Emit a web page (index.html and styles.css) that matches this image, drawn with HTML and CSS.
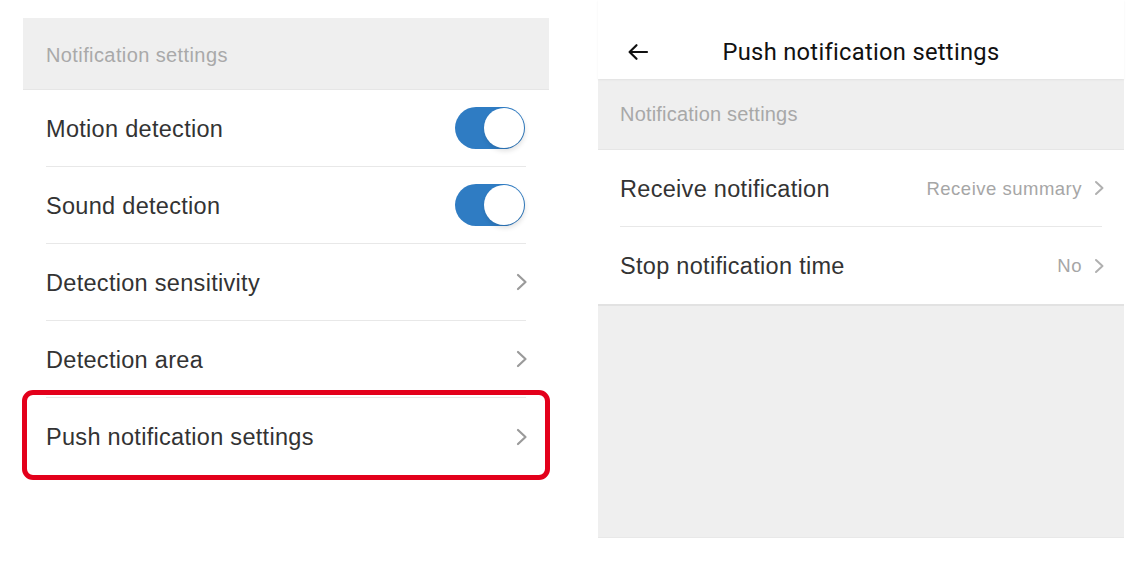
FILE: index.html
```html
<!DOCTYPE html>
<html lang="en">
<head>
<meta charset="utf-8">
<title>Push notification settings</title>
<link rel="stylesheet" href="styles.css">
</head>
<body>
<div class="page">
  <section class="panel panel-left">
    <div class="group-header">Notification settings</div>
    <div class="row">
      <span class="label">Motion detection</span>
      <span class="toggle"><span class="knob"></span></span>
    </div>
    <div class="row">
      <span class="label">Sound detection</span>
      <span class="toggle"><span class="knob"></span></span>
    </div>
    <div class="row">
      <span class="label">Detection sensitivity</span>
      <svg class="chev" width="12" height="18" viewBox="0 0 12 18"><path d="M2 2 L9.5 9 L2 16" fill="none" stroke="#9a9a9a" stroke-width="2.2" stroke-linecap="round" stroke-linejoin="round"/></svg>
    </div>
    <div class="row">
      <span class="label">Detection area</span>
      <svg class="chev" width="12" height="18" viewBox="0 0 12 18"><path d="M2 2 L9.5 9 L2 16" fill="none" stroke="#9a9a9a" stroke-width="2.2" stroke-linecap="round" stroke-linejoin="round"/></svg>
    </div>
    <div class="row row-last">
      <span class="label">Push notification settings</span>
      <svg class="chev" width="12" height="18" viewBox="0 0 12 18"><path d="M2 2 L9.5 9 L2 16" fill="none" stroke="#9a9a9a" stroke-width="2.2" stroke-linecap="round" stroke-linejoin="round"/></svg>
      <span class="highlight"></span>
    </div>
  </section>

  <section class="panel panel-right">
    <div class="topbar">
      <svg class="back" width="22" height="18" viewBox="0 0 22 18"><path d="M20 9 H3 M9.5 2.2 L2.6 9 L9.5 15.8" fill="none" stroke="#111" stroke-width="2.2" stroke-linecap="round" stroke-linejoin="round"/></svg>
      <h1 class="title">Push notification settings</h1>
    </div>
    <div class="group-header group-header-right">Notification settings</div>
    <div class="row row-r">
      <span class="label">Receive notification</span>
      <span class="value">Receive summary</span>
      <svg class="chev-s" width="11" height="16" viewBox="0 0 11 16"><path d="M2 2 L8.5 8 L2 14" fill="none" stroke="#b0b0b0" stroke-width="2" stroke-linecap="round" stroke-linejoin="round"/></svg>
    </div>
    <div class="row row-r row-last">
      <span class="label">Stop notification time</span>
      <span class="value">No</span>
      <svg class="chev-s" width="11" height="16" viewBox="0 0 11 16"><path d="M2 2 L8.5 8 L2 14" fill="none" stroke="#b0b0b0" stroke-width="2" stroke-linecap="round" stroke-linejoin="round"/></svg>
    </div>
    <div class="empty"></div>
  </section>
</div>
</body>
</html>
```

FILE: styles.css
```css
* { box-sizing: border-box; }

html, body {
  margin: 0;
  padding: 0;
  background: #ffffff;
}

body {
  font-family: "Liberation Sans", Arial, sans-serif;
  color: #333333;
}

.page {
  display: flex;
  align-items: flex-start;
  padding-left: 23px;
  gap: 49px;
}

.panel {
  width: 526px;
  display: flex;
  flex-direction: column;
}

.panel-left {
  margin-top: 18px;
}

.group-header {
  height: 72px;
  background: #efefef;
  border-bottom: 1px solid #e6e6e6;
  display: flex;
  align-items: center;
  padding-left: 23px;
  padding-top: 3px;
  font-size: 20px;
  letter-spacing: 0.4px;
  color: #a9a9a9;
}

.row {
  height: 77px;
  margin-left: 23px;
  margin-right: 23px;
  display: flex;
  align-items: center;
  border-bottom: 1.5px solid #e8e8e8;
  position: relative;
}

.row-last {
  border-bottom: none;
}

.label {
  flex: 1;
  font-size: 23.5px;
  letter-spacing: 0.3px;
  color: #333333;
  padding-top: 2px;
}

.toggle {
  width: 70px;
  height: 42px;
  border-radius: 21px;
  background: #2f7cc3;
  display: flex;
  align-items: center;
  justify-content: flex-end;
  padding-right: 1px;
  margin-right: 1px;
}

.knob {
  width: 40px;
  height: 40px;
  border-radius: 50%;
  background: #ffffff;
  box-shadow: 1px 3px 5px rgba(0, 0, 0, 0.12);
}

.chev {
  margin-right: -2px;
}

.highlight {
  position: absolute;
  left: -24px;
  right: -24px;
  top: -8px;
  bottom: -5px;
  border: 5px solid #e3001b;
  border-radius: 11px;
  pointer-events: none;
}

/* Right panel */
.topbar {
  height: 79px;
  padding-top: 24px;
  display: flex;
  align-items: center;
  justify-content: center;
  position: relative;
  box-shadow: 0 1px 2px rgba(0, 0, 0, 0.06);
  z-index: 1;
}

.back {
  position: absolute;
  left: 29px;
  top: 43px;
}

.title {
  margin: 0;
  font-family: Roboto, "Liberation Sans", Arial, sans-serif;
  font-weight: 400;
  font-size: 23.7px;
  letter-spacing: 0.3px;
  color: #111111;
}

.group-header-right {
  height: 71px;
  padding-left: 22px;
  padding-top: 0;
  font-size: 20px;
  letter-spacing: 0.2px;
  color: #a8a8a8;
}

.row-r {
  margin-left: 22px;
  margin-right: 22px;
}

.value {
  font-size: 18.5px;
  letter-spacing: 0.5px;
  color: #a6a6a6;
  margin-right: 12px;
  padding-top: 1px;
}

.chev-s {
  margin-right: -3px;
}

.empty {
  height: 234px;
  background: #efefef;
  border-top: 2px solid #e2e2e2;
  border-bottom: 1px solid #e8e8e8;
}
```
